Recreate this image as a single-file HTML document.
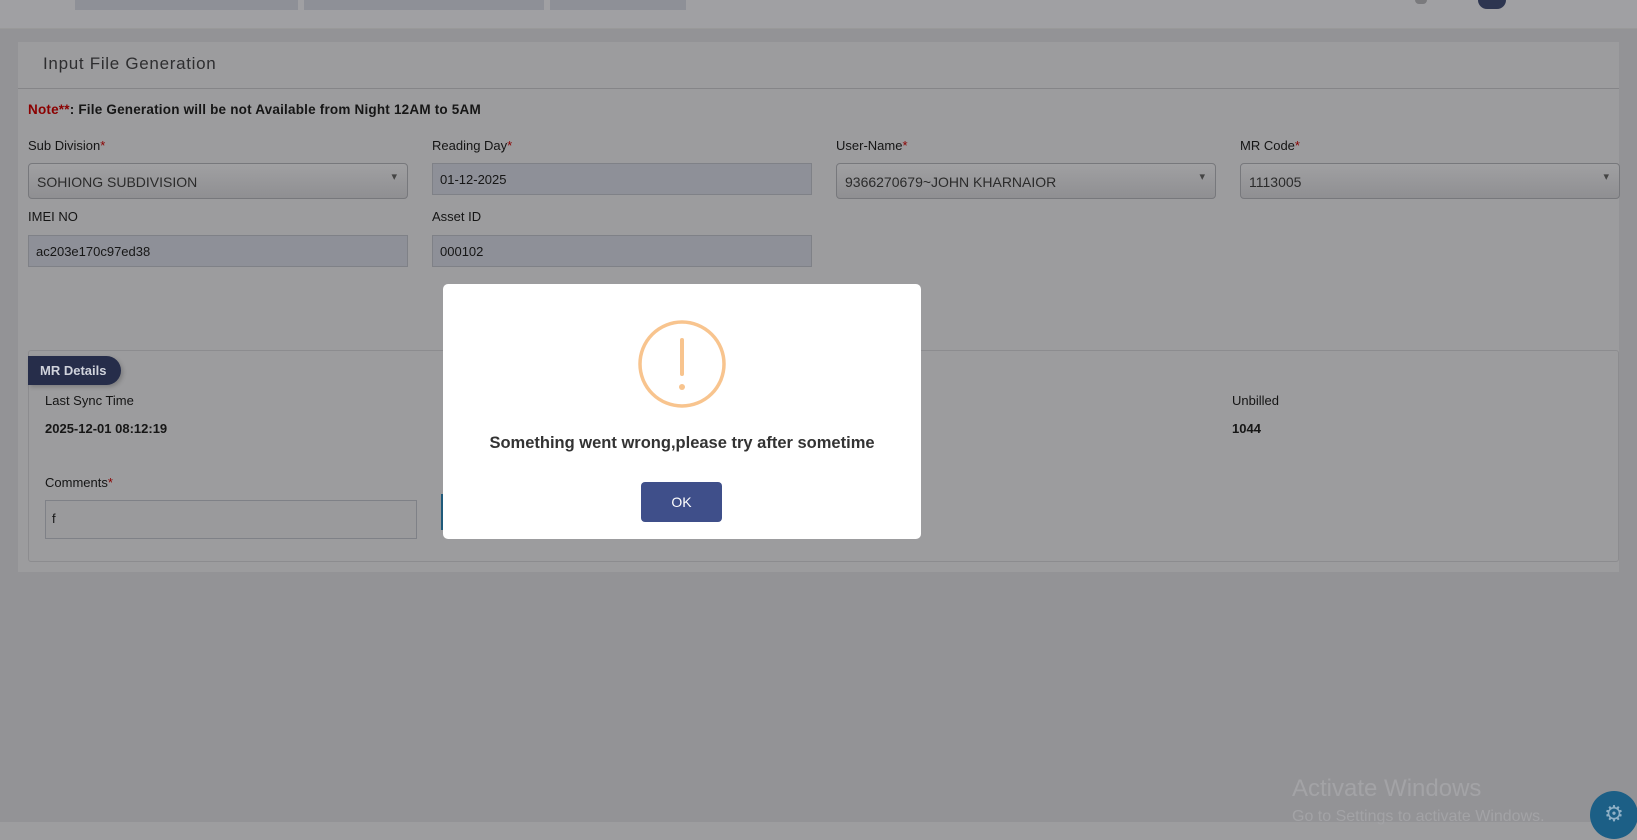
<!DOCTYPE html>
<html><head><style>
*{margin:0;padding:0;box-sizing:border-box}
body{width:1637px;height:840px;overflow:hidden;background:#939396;font-family:"Liberation Sans",sans-serif;position:relative;color:#111}
.a{position:absolute}
.top{left:0;top:0;width:1637px;height:29px;background:#a0a0a3;border-bottom:1px solid #999}
.tab{top:0;height:10px;background:#8e9097}
.card{left:18px;top:42px;width:1601px;height:530px;background:#9c9c9e}
.lbl{font-size:13px;color:#151515}
.req{color:#8b0000}
.inp{height:32px;border:1px solid #7f8187;background:#8e9098;font-size:13px;padding:8px 7px;color:#161616}
.sel{height:36px;border:1px solid #77787c;border-radius:4px;background:linear-gradient(#a0a0a2,#8f8f92);font-size:14px;padding:10px 8px;color:#2b2b2b}
.sel:after{content:"▾";position:absolute;right:10px;top:6px;font-size:11px;color:#444}
.bold{font-weight:bold;font-size:13px;color:#161616}
</style></head><body>
<div class="a top"></div>
<div class="a tab" style="left:75px;width:223px"></div>
<div class="a tab" style="left:304px;width:240px"></div>
<div class="a tab" style="left:550px;width:136px"></div>
<div class="a" style="left:1415px;top:0;width:12px;height:4px;border-radius:0 0 6px 6px;background:#7a7a7d"></div>
<div class="a" style="left:1478px;top:0;width:28px;height:9px;border-radius:0 0 14px 14px;background:#2d3550"></div>
<div class="a card"></div>
<div class="a" style="left:18px;top:88px;width:1601px;height:1px;background:#858588"></div>
<div class="a" style="left:43px;top:54px;font-size:17px;color:#2e2e30;letter-spacing:.7px">Input File Generation</div>
<div class="a bold" style="left:28px;top:102px;font-size:13.5px;letter-spacing:.2px"><span style="color:#8b0000">Note**</span>: File Generation will be not Available from Night 12AM to 5AM</div>
<div class="a lbl" style="left:28px;top:138px">Sub Division<span class="req">*</span></div>
<div class="a lbl" style="left:432px;top:138px">Reading Day<span class="req">*</span></div>
<div class="a lbl" style="left:836px;top:138px">User-Name<span class="req">*</span></div>
<div class="a lbl" style="left:1240px;top:138px">MR Code<span class="req">*</span></div>
<div class="a sel" style="left:28px;top:163px;width:380px">SOHIONG SUBDIVISION</div>
<div class="a inp" style="left:432px;top:163px;width:380px;height:32px">01-12-2025</div>
<div class="a sel" style="left:836px;top:163px;width:380px">9366270679~JOHN KHARNAIOR</div>
<div class="a sel" style="left:1240px;top:163px;width:380px">1113005</div>
<div class="a lbl" style="left:28px;top:209px">IMEI NO</div>
<div class="a lbl" style="left:432px;top:209px">Asset ID</div>
<div class="a inp" style="left:28px;top:235px;width:380px">ac203e170c97ed38</div>
<div class="a inp" style="left:432px;top:235px;width:380px">000102</div>
<div class="a" style="left:28px;top:350px;width:1591px;height:212px;border:1px solid #8c8c8f;border-radius:3px"></div>
<div class="a" style="left:28px;top:356px;width:93px;height:29px;border-radius:0 15px 15px 0;background:#262d4a;color:#d0d3dc;font-size:13px;font-weight:bold;padding:7px 12px;box-shadow:2px 2px 4px rgba(0,0,0,.2)">MR Details</div>
<div class="a lbl" style="left:45px;top:393px">Last Sync Time</div>
<div class="a bold" style="left:45px;top:421px">2025-12-01 08:12:19</div>
<div class="a lbl" style="left:1232px;top:393px">Unbilled</div>
<div class="a bold" style="left:1232px;top:421px">1044</div>
<div class="a lbl" style="left:45px;top:475px">Comments<span class="req">*</span></div>
<div class="a inp" style="left:45px;top:500px;width:372px;height:39px;background:#9a9a9c;padding:10px 6px">f</div>
<div class="a" style="left:441px;top:494px;width:4px;height:36px;background:#1f5a7a"></div>
<div class="a" style="left:0;top:822px;width:1637px;height:18px;background:#9d9d9f"></div>
<div class="a" style="left:1292px;top:775px;font-size:24px;color:#a3a3a6">Activate Windows</div>
<div class="a" style="left:1292px;top:808px;font-size:16px;color:#a3a3a6">Go to Settings to activate Windows.</div>
<div class="a" style="left:1590px;top:791px;width:48px;height:48px;border-radius:50%;background:#1c5f86;color:#8fb0c6;font-size:22px;text-align:center;line-height:46px">⚙</div>
<div class="a" style="left:443px;top:284px;width:478px;height:255px;background:#fff;border-radius:5px"></div>
<svg class="a" style="left:636px;top:318px" width="92" height="92"><circle cx="46" cy="46" r="42" fill="none" stroke="#f8c48e" stroke-width="3.5"/><line x1="46" y1="22" x2="46" y2="56" stroke="#f8c48e" stroke-width="4" stroke-linecap="round"/><circle cx="46" cy="69" r="3" fill="#f8c48e"/></svg>
<div class="a" style="left:443px;top:434px;width:478px;text-align:center;font-size:16.5px;font-weight:bold;color:#333">Something went wrong,please try after sometime</div>
<div class="a" style="left:641px;top:482px;width:81px;height:40px;background:#3f4f8a;border-radius:4px;color:#fff;font-size:14px;text-align:center;line-height:40px">OK</div>
</body></html>
